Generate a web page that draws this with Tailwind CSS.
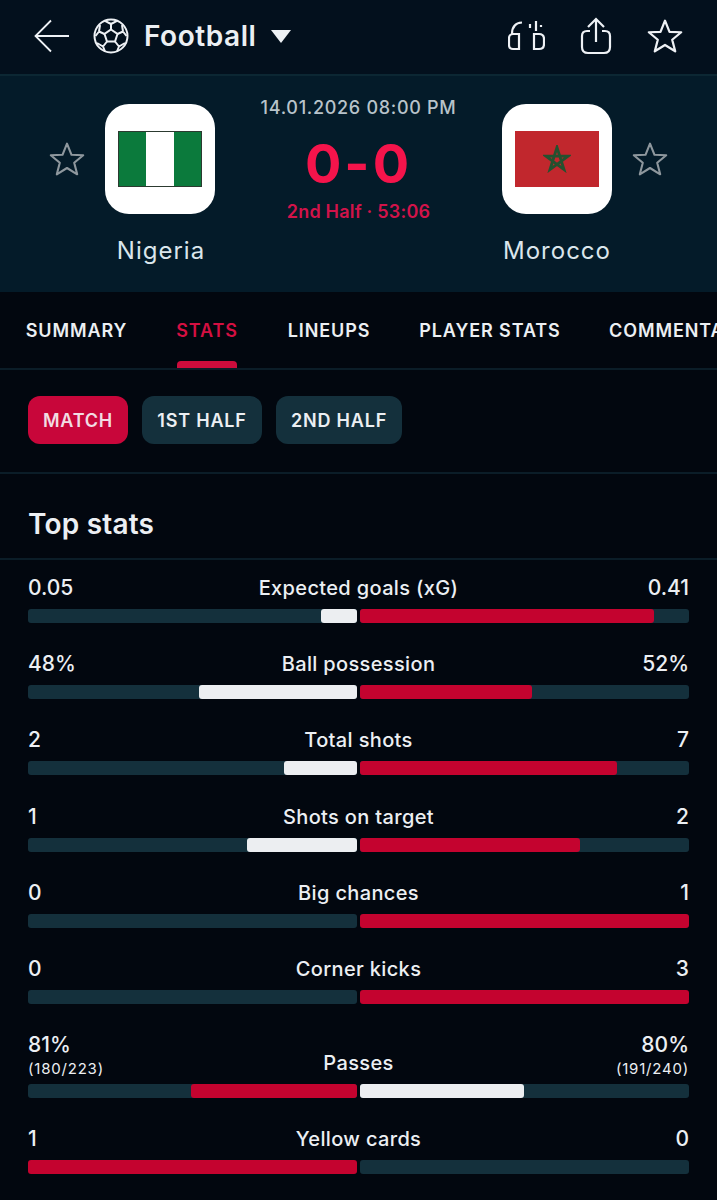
<!doctype html>
<html lang="en">
<head>
<meta charset="utf-8">
<script src="https://cdn.jsdelivr.net/npm/@tailwindcss/browser@4"></script>
<title>Match stats</title>
</head>
<body class="m-0 bg-[#02070f] font-['Inter','Noto_Sans',sans-serif] text-[#eceff3]">
<div class="w-[717px] h-[1200px] overflow-hidden">
  <header class="h-[76px] bg-[#03101d] border-b-2 border-[#0c2733] flex items-center pb-[2px] pl-[34px] pr-[34px]">
    <svg class="w-[36px] h-[34px] shrink-0" viewBox="0 0 36 34" fill="none" stroke="#eef1f5" stroke-width="1.800"><path d="M35 17H2M17 1.500 1.500 17 17 32.500"/></svg>
    <svg class="ml-[23px] w-[36px] h-[36px] shrink-0" viewBox="0 0 36 36" fill="none" stroke="#eef1f5" stroke-width="2"><circle cx="18" cy="18" r="16.500"/><path d="M18 11.500 24.500 16 22 23.500H14L11.500 16Z"/><path d="M18 11.500V6M18 6 12 2.800M18 6 24 2.800M24.500 16 30 13.500M30 13.500 33.500 18M30 13.500 29 7M11.500 16 6 13.500M6 13.500 2.500 18M6 13.500 7 7M22 23.500 26 28.500M26 28.500 32 25M26 28.500 24 33.500M14 23.500 10 28.500M10 28.500 4 25M10 28.500 12 33.500"/></svg>
    <span class="ml-[15px] text-[28px] leading-none font-semibold tracking-[0.55px]">Football</span>
    <span class="ml-[15px] w-0 h-0 border-x-[10px] border-x-transparent border-t-[13px] border-t-[#eef1f5]"></span>
    <svg class="ml-auto w-[37px] h-[30px] shrink-0" viewBox="0 0 37 30" fill="none" stroke="#eef1f5" stroke-width="2.200"><path d="M4 13C4 7 6 2 14 1.500"/><path d="M11 13H5C2.500 13 1 15 1 17V24C1 26.500 2.500 28 5 28H11Z"/><path d="M26 13H31C34 13 36 15 36 18V23C36 26 34 28 31 28H26Z"/><path d="M28 0V10M22 3V7M33 4V6"/></svg>
    <svg class="ml-[35px] w-[32px] h-[38px] shrink-0" viewBox="0 0 32 38" fill="none" stroke="#eef1f5" stroke-width="2.200"><path d="M16 25V3M8 10 16 2 24 10"/><path d="M10 14H7C3.500 14 2 16 2 19V30C2 34 4 36 8 36H24C28 36 30 34 30 30V19C30 16 28.500 14 25 14H22"/></svg>
    <svg class="ml-[35px] w-[36px] h-[36px] shrink-0" viewBox="0 0 24 24" fill="none" stroke="#eef1f5" stroke-width="1.500" stroke-linejoin="round"><path d="M12 1.800 15 9.200 22.800 9.500 16.800 14.500 18.800 22.200 12 18 5.200 22.200 7.200 14.500 1.200 9.500 9 9.200Z"/></svg>
  </header>

  <section class="h-[216px] bg-[#041b29] flex justify-center">
    <div class="w-[717px] grid grid-cols-[49px_36px_20px_110px_1fr_110px_20px_36px_49px] items-start">
      <svg class="col-start-2 mt-[65px] w-[36px] h-[36px]" viewBox="0 0 24 24" fill="none" stroke="#8e979d" stroke-width="1.400" stroke-linejoin="round"><path d="M12 1.800 15 9.200 22.800 9.500 16.800 14.500 18.800 22.200 12 18 5.200 22.200 7.200 14.500 1.200 9.500 9 9.200Z"/></svg>
      <div class="col-start-4 mt-[28px] flex flex-col items-center">
        <div class="w-[110px] h-[110px] rounded-[24px] bg-white flex items-center justify-center">
          <div class="w-[84px] h-[56px] flex border border-[#2c3a30]">
            <span class="flex-1 bg-[#0b7a3c]"></span><span class="flex-1 bg-white"></span><span class="flex-1 bg-[#0b7a3c]"></span>
          </div>
        </div>
        <span class="mt-[22px] text-[24px] leading-[30px] tracking-[1px] text-[#dbe6ec] whitespace-nowrap translate-x-[1px]">Nigeria</span>
      </div>
      <div class="col-start-5 mt-[20px] flex flex-col items-center">
        <span class="text-[18px] leading-[24px] font-medium tracking-[0.7px] text-[#b8c3ca] whitespace-nowrap">14.01.2026 08:00 PM</span>
        <span class="mt-[18px] text-[54px] leading-[52px] font-bold tracking-[3px] text-[#f5144b] whitespace-nowrap">0-0</span>
        <span class="mt-[11px] text-[18px] leading-[22px] font-semibold tracking-[0.2px] text-[#d2134a] whitespace-nowrap">2nd Half · 53:06</span>
      </div>
      <div class="col-start-6 mt-[28px] flex flex-col items-center">
        <div class="w-[110px] h-[110px] rounded-[24px] bg-white flex items-center justify-center">
          <div class="w-[84px] h-[56px] bg-[#c1272d] flex items-center justify-center">
            <svg class="w-[28px] h-[28px]" viewBox="0 0 24 24" fill="none" stroke="#24512f" stroke-width="2.400"><path d="M12 2 18 21 2.500 9.500H21.500L6 21Z"/></svg>
          </div>
        </div>
        <span class="mt-[22px] text-[24px] leading-[30px] tracking-[1px] text-[#dbe6ec] whitespace-nowrap">Morocco</span>
      </div>
      <svg class="col-start-8 mt-[65px] w-[36px] h-[36px]" viewBox="0 0 24 24" fill="none" stroke="#8e979d" stroke-width="1.400" stroke-linejoin="round"><path d="M12 1.800 15 9.200 22.800 9.500 16.800 14.500 18.800 22.200 12 18 5.200 22.200 7.200 14.500 1.200 9.500 9 9.200Z"/></svg>
    </div>
  </section>

  <nav class="h-[78px] border-b-2 border-[#0b1d28] flex pl-[25px] text-[18px] leading-[24px] font-semibold tracking-[0.9px] whitespace-nowrap overflow-hidden">
    <span class="shrink-0 w-[103px] flex justify-center pt-[27px]">SUMMARY</span>
    <span class="shrink-0 ml-[49px] w-[60px] flex justify-center pt-[27px] relative text-[#d40f41]">STATS<span class="absolute left-0 right-0 bottom-0 h-[7px] rounded-t-[4px] bg-[#cc0c3c]"></span></span>
    <span class="shrink-0 ml-[50px] w-[84px] flex justify-center pt-[27px]">LINEUPS</span>
    <span class="shrink-0 ml-[51px] w-[136px] flex justify-center pt-[27px]">PLAYER STATS</span>
    <span class="shrink-0 ml-[51px] pt-[27px]">COMMENTARY</span>
  </nav>

  <div class="h-[104px] border-b-2 border-[#0b1d28] flex gap-[14px] pl-[28px] pt-[26px] text-[18px] leading-[50px] font-semibold tracking-[0.8px]">
    <span class="h-[48px] w-[100px] rounded-[12px] bg-[#c8063a] text-center text-[#f1dce2]">MATCH</span>
    <span class="h-[48px] w-[120px] rounded-[12px] bg-[#14303c] text-center">1ST HALF</span>
    <span class="h-[48px] w-[126px] rounded-[12px] bg-[#14303c] text-center">2ND HALF</span>
  </div>

  <h2 class="h-[86px] border-b-2 border-[#0b1d28] pl-[28px] pt-[32px] text-[28px] leading-[36px] font-semibold tracking-[0.2px]">Top stats</h2>

  <div class="px-[28px] pt-[18px] text-[20px] leading-[20px] font-medium tracking-[0.35px]">
    <div class="h-[76.200px]">
      <div class="grid grid-cols-[1fr_auto_1fr]"><span class="text-[21px] tracking-normal">0.05</span><span>Expected goals (xG)</span><span class="text-right text-[21px] tracking-normal">0.41</span></div>
      <div class="mt-[11px] flex gap-[3px]">
        <div class="flex-1 h-[14px] rounded-[3px] bg-[#14303c] flex justify-end"><div class="w-[36px] rounded-[3px] bg-[#eceef1]"></div></div>
        <div class="flex-1 h-[14px] rounded-[3px] bg-[#14303c]"><div class="w-[294px] h-full rounded-[3px] bg-[#c4032f]"></div></div>
      </div>
    </div>
    <div class="h-[76.200px]">
      <div class="grid grid-cols-[1fr_auto_1fr]"><span class="text-[21px] tracking-normal">48%</span><span>Ball possession</span><span class="text-right text-[21px] tracking-normal">52%</span></div>
      <div class="mt-[11px] flex gap-[3px]">
        <div class="flex-1 h-[14px] rounded-[3px] bg-[#14303c] flex justify-end"><div class="w-[158px] rounded-[3px] bg-[#eceef1]"></div></div>
        <div class="flex-1 h-[14px] rounded-[3px] bg-[#14303c]"><div class="w-[172px] h-full rounded-[3px] bg-[#c4032f]"></div></div>
      </div>
    </div>
    <div class="h-[76.200px]">
      <div class="grid grid-cols-[1fr_auto_1fr]"><span class="text-[21px] tracking-normal">2</span><span>Total shots</span><span class="text-right text-[21px] tracking-normal">7</span></div>
      <div class="mt-[11px] flex gap-[3px]">
        <div class="flex-1 h-[14px] rounded-[3px] bg-[#14303c] flex justify-end"><div class="w-[73px] rounded-[3px] bg-[#eceef1]"></div></div>
        <div class="flex-1 h-[14px] rounded-[3px] bg-[#14303c]"><div class="w-[257px] h-full rounded-[3px] bg-[#c4032f]"></div></div>
      </div>
    </div>
    <div class="h-[76.200px]">
      <div class="grid grid-cols-[1fr_auto_1fr]"><span class="text-[21px] tracking-normal">1</span><span>Shots on target</span><span class="text-right text-[21px] tracking-normal">2</span></div>
      <div class="mt-[11px] flex gap-[3px]">
        <div class="flex-1 h-[14px] rounded-[3px] bg-[#14303c] flex justify-end"><div class="w-[110px] rounded-[3px] bg-[#eceef1]"></div></div>
        <div class="flex-1 h-[14px] rounded-[3px] bg-[#14303c]"><div class="w-[220px] h-full rounded-[3px] bg-[#c4032f]"></div></div>
      </div>
    </div>
    <div class="h-[76.200px]">
      <div class="grid grid-cols-[1fr_auto_1fr]"><span class="text-[21px] tracking-normal">0</span><span>Big chances</span><span class="text-right text-[21px] tracking-normal">1</span></div>
      <div class="mt-[11px] flex gap-[3px]">
        <div class="flex-1 h-[14px] rounded-[3px] bg-[#14303c]"></div>
        <div class="flex-1 h-[14px] rounded-[3px] bg-[#c4032f]"></div>
      </div>
    </div>
    <div class="h-[76.200px]">
      <div class="grid grid-cols-[1fr_auto_1fr]"><span class="text-[21px] tracking-normal">0</span><span>Corner kicks</span><span class="text-right text-[21px] tracking-normal">3</span></div>
      <div class="mt-[11px] flex gap-[3px]">
        <div class="flex-1 h-[14px] rounded-[3px] bg-[#14303c]"></div>
        <div class="flex-1 h-[14px] rounded-[3px] bg-[#c4032f]"></div>
      </div>
    </div>
    <div class="h-[94px]">
      <div class="h-[49px] grid grid-cols-[1fr_auto_1fr] items-start">
        <div class="flex flex-col"><span class="text-[21px] tracking-normal">81%</span><span class="mt-[6px] text-[15px] leading-[16px] tracking-[0.8px] font-normal">(180/223)</span></div>
        <span class="mt-[18px]">Passes</span>
        <div class="flex flex-col items-end"><span class="text-[21px] tracking-normal">80%</span><span class="mt-[6px] text-[15px] leading-[16px] tracking-[0.8px] font-normal">(191/240)</span></div>
      </div>
      <div class="flex gap-[3px]">
        <div class="flex-1 h-[14px] rounded-[3px] bg-[#14303c] flex justify-end"><div class="w-[166px] rounded-[3px] bg-[#c4032f]"></div></div>
        <div class="flex-1 h-[14px] rounded-[3px] bg-[#14303c]"><div class="w-[164px] h-full rounded-[3px] bg-[#eceef1]"></div></div>
      </div>
    </div>
    <div class="h-[76.200px]">
      <div class="grid grid-cols-[1fr_auto_1fr]"><span class="text-[21px] tracking-normal">1</span><span>Yellow cards</span><span class="text-right text-[21px] tracking-normal">0</span></div>
      <div class="mt-[11px] flex gap-[3px]">
        <div class="flex-1 h-[14px] rounded-[3px] bg-[#c4032f]"></div>
        <div class="flex-1 h-[14px] rounded-[3px] bg-[#14303c]"></div>
      </div>
    </div>
  </div>
</div>
</body>
</html>
